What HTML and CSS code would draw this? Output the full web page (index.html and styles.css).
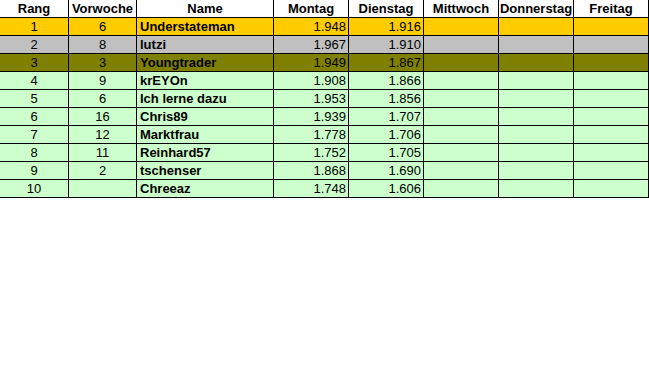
FILE: index.html
```html
<!DOCTYPE html>
<html lang="de">
<head>
<meta charset="utf-8">
<title>Rangliste</title>
<link rel="stylesheet" href="styles.css">
</head>
<body>
<div class="sheet">
  <div class="row head">
    <div class="c">Rang</div><div class="c">Vorwoche</div><div class="c">Name</div><div class="c">Montag</div><div class="c">Dienstag</div><div class="c">Mittwoch</div><div class="c">Donnerstag</div><div class="c">Freitag</div>
  </div>
  <div class="row gold">
    <div class="c">1</div><div class="c">6</div><div class="c n">Understateman</div><div class="c r">1.948</div><div class="c r">1.916</div><div class="c"></div><div class="c"></div><div class="c"></div>
  </div>
  <div class="row silver">
    <div class="c">2</div><div class="c">8</div><div class="c n">lutzi</div><div class="c r">1.967</div><div class="c r">1.910</div><div class="c"></div><div class="c"></div><div class="c"></div>
  </div>
  <div class="row bronze">
    <div class="c">3</div><div class="c">3</div><div class="c n">Youngtrader</div><div class="c r">1.949</div><div class="c r">1.867</div><div class="c"></div><div class="c"></div><div class="c"></div>
  </div>
  <div class="row green">
    <div class="c">4</div><div class="c">9</div><div class="c n">krEYOn</div><div class="c r">1.908</div><div class="c r">1.866</div><div class="c"></div><div class="c"></div><div class="c"></div>
  </div>
  <div class="row green">
    <div class="c">5</div><div class="c">6</div><div class="c n">Ich lerne dazu</div><div class="c r">1.953</div><div class="c r">1.856</div><div class="c"></div><div class="c"></div><div class="c"></div>
  </div>
  <div class="row green">
    <div class="c">6</div><div class="c">16</div><div class="c n">Chris89</div><div class="c r">1.939</div><div class="c r">1.707</div><div class="c"></div><div class="c"></div><div class="c"></div>
  </div>
  <div class="row green">
    <div class="c">7</div><div class="c">12</div><div class="c n">Marktfrau</div><div class="c r">1.778</div><div class="c r">1.706</div><div class="c"></div><div class="c"></div><div class="c"></div>
  </div>
  <div class="row green">
    <div class="c">8</div><div class="c">11</div><div class="c n">Reinhard57</div><div class="c r">1.752</div><div class="c r">1.705</div><div class="c"></div><div class="c"></div><div class="c"></div>
  </div>
  <div class="row green">
    <div class="c">9</div><div class="c">2</div><div class="c n">tschenser</div><div class="c r">1.868</div><div class="c r">1.690</div><div class="c"></div><div class="c"></div><div class="c"></div>
  </div>
  <div class="row green">
    <div class="c">10</div><div class="c"></div><div class="c n">Chreeaz</div><div class="c r">1.748</div><div class="c r">1.606</div><div class="c"></div><div class="c"></div><div class="c"></div>
  </div>
</div>
</body>
</html>
```

FILE: styles.css
```css
html, body {
  margin: 0;
  padding: 0;
  background: #ffffff;
}
.sheet {
  width: 649px;
  font-family: "Liberation Sans", Arial, sans-serif;
  font-size: 13px;
  color: #000000;
}
.row {
  display: grid;
  grid-template-columns: 69px 68px 137px 75px 75px 75px 75px 75px;
  height: 18px;
}
.c {
  box-sizing: border-box;
  border-right: 1px solid #000000;
  border-bottom: 1px solid #000000;
  height: 18px;
  line-height: 17px;
  text-align: center;
  white-space: nowrap;
  overflow: hidden;
}
.head .c {
  font-weight: bold;
  background: #ffffff;
}
.n {
  text-align: left;
  font-weight: bold;
  padding-left: 3px;
}
.r {
  text-align: right;
  padding-right: 2px;
}
.gold { background: #ffcc00; }
.silver { background: #c0c0c0; }
.bronze { background: #808000; }
.green { background: #ccffcc; }
```
